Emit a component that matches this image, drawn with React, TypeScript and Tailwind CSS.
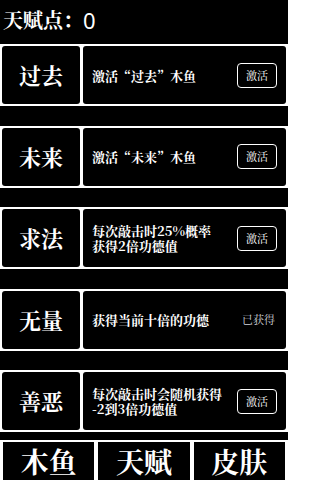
import React from 'react';

type Talent = {
  name: string;
  desc: string[];
  owned?: boolean;
};

const talents: Talent[] = [
  { name: '过去', desc: ['激活“过去”木鱼'] },
  { name: '未来', desc: ['激活“未来”木鱼'] },
  { name: '求法', desc: ['每次敲击时25%概率', '获得2倍功德值'] },
  { name: '无量', desc: ['获得当前十倍的功德'], owned: true },
  { name: '善恶', desc: ['每次敲击时会随机获得', '-2到3倍功德值'] },
];

const font = { fontFamily: '"Noto Serif CJK SC", "Noto Sans CJK SC", serif' };

const TalentRow: React.FC<{ talent: Talent }> = ({ talent }) => (
  <div className="flex h-[62px] gap-[3px] bg-white p-[2px]">
    <div className="flex w-[78px] shrink-0 items-center justify-center rounded-[3px] bg-black">
      <span className="text-[22px] font-bold leading-none text-white">{talent.name}</span>
    </div>
    <div className="flex flex-1 items-center rounded-[3px] bg-black pl-[9px] pr-[9px]">
      <p className="flex-1 text-[13px] font-bold leading-[15px] text-white">
        {talent.desc.map((line, i) => (
          <React.Fragment key={line}>
            {i > 0 && <br />}
            {line}
          </React.Fragment>
        ))}
      </p>
      {talent.owned ? (
        <span className="mr-[2px] text-[11px] text-gray-300">已获得</span>
      ) : (
        <button className="flex h-[25px] w-[40px] items-center justify-center rounded-[4px] border border-white text-[11px] text-white">
          激活
        </button>
      )}
    </div>
  </div>
);

export default function App() {
  return (
    <div className="flex h-[480px] w-[288px] flex-col overflow-hidden bg-black" style={font}>
      <div className="flex h-[44px] items-center pl-[3px] pb-[4px]">
        <span className="text-[20px] font-bold text-white">天赋点：</span>
        <span className="text-[22px] text-white" style={{ fontFamily: '"Noto Sans", sans-serif' }}>0</span>
      </div>
      <div className="flex flex-col gap-[19.5px]">
        {talents.map((t) => (
          <TalentRow key={t.name} talent={t} />
        ))}
      </div>
      <div className="mt-auto flex h-[40px] gap-[4px] bg-white px-[3px] pt-[2px]">
        {['木鱼', '天赋', '皮肤'].map((tab) => (
          <div key={tab} className="flex flex-1 items-center justify-center bg-black">
            <span className="text-[28px] font-bold leading-none text-white">{tab}</span>
          </div>
        ))}
      </div>
    </div>
  );
}
